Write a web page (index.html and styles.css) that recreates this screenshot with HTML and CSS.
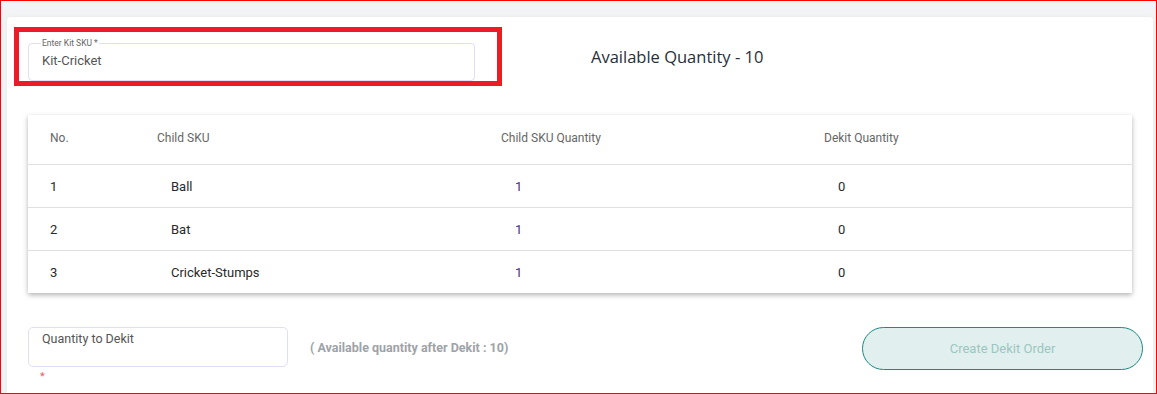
FILE: index.html
```html
<!DOCTYPE html>
<html lang="en">
<head>
    <meta charset="UTF-8">
    <meta name="viewport" content="width=device-width, initial-scale=1.0">
    <title>Dekit Order</title>
    <link rel="stylesheet" href="styles.css">
</head>
<body>

    <div class="frame">
        <div class="card">

            <!-- Kit SKU row -->
            <div class="top-row">
                <div class="highlight">
                    <fieldset class="sku-field">
                        <legend>Enter Kit SKU *</legend>
                        <span class="sku-value">Kit-Cricket</span>
                    </fieldset>
                </div>
                <div class="available">Available Quantity - 10</div>
            </div>

            <!-- Child SKU table -->
            <div class="sku-table">
                <div class="row head">
                    <div>No.</div>
                    <div>Child SKU</div>
                    <div>Child SKU Quantity</div>
                    <div>Dekit Quantity</div>
                </div>
                <div class="row">
                    <div>1</div>
                    <div class="pad">Ball</div>
                    <div class="pad qty">1</div>
                    <div class="pad">0</div>
                </div>
                <div class="row">
                    <div>2</div>
                    <div class="pad">Bat</div>
                    <div class="pad qty">1</div>
                    <div class="pad">0</div>
                </div>
                <div class="row">
                    <div>3</div>
                    <div class="pad">Cricket-Stumps</div>
                    <div class="pad qty">1</div>
                    <div class="pad">0</div>
                </div>
            </div>

            <!-- Dekit form -->
            <div class="bottom-row">
                <div class="qty-group">
                    <div class="qty-field">Quantity to Dekit</div>
                    <span class="required">*</span>
                </div>
                <div class="after-note">( Available quantity after Dekit : 10)</div>
                <button class="create-btn" disabled>Create Dekit Order</button>
            </div>

        </div>
    </div>

</body>
</html>
```

FILE: styles.css
```css
/* General reset */
* {
    margin: 0;
    padding: 0;
    box-sizing: border-box;
    font-family: Roboto, Arial, sans-serif;
}

body {
    width: 1157px;
    height: 394px;
    overflow: hidden;
}

/* Outer frame */
.frame {
    height: 394px;
    border: 1px solid #ff0000;
    background-color: #f2f3f5;
    padding: 16px 3px 0 6px;
}

.card {
    height: 100%;
    background-color: #fff;
    border-radius: 4px 4px 0 0;
    box-shadow: 0 0 3px rgba(0, 0, 0, 0.06);
    padding: 10px 10px 0 7px;
}

/* Top row */
.top-row {
    display: flex;
    align-items: center;
}

.highlight {
    width: 488px;
    height: 59px;
    border: 5px solid #ed1c24;
    padding: 6px 0 0 9px;
}

.sku-field {
    width: 447px;
    height: 43px;
    border: 1px solid #dfdff5;
    border-radius: 4px;
    padding: 0 13px;
}

.sku-field legend {
    font-size: 8.5px;
    color: #666;
    padding: 0 1px;
    margin-left: -1px;
}

.sku-value {
    display: block;
    font-size: 13px;
    color: #555;
    margin-top: 5px;
}

.available {
    margin: 0 0 0 89px;
    font-family: "Open Sans", Roboto, sans-serif;
    font-size: 16.5px;
    font-weight: 500;
    color: #27303a;
}

/* Table */
.sku-table {
    width: 1104px;
    margin: 29px 0 0 14px;
    box-shadow: 0 2px 5px rgba(0, 0, 0, 0.3);
}

.row {
    display: grid;
    grid-template-columns: 107px 344px 323px 1fr;
    align-items: center;
    height: 43px;
    padding-left: 22px;
    border-top: 1px solid #e0e0e0;
    font-size: 13px;
    color: #2a2a2a;
}

.row.head {
    height: 49px;
    border-top: none;
    font-size: 12px;
    color: #666;
    padding-bottom: 3px;
}

.row .pad {
    padding-left: 14px;
}

.row .qty {
    color: #4b2a8c;
}

/* Bottom row */
.bottom-row {
    display: flex;
    align-items: flex-start;
    margin: 34px 0 0 14px;
}

.qty-group {
    width: 260px;
}

.qty-field {
    height: 40px;
    border: 1px solid #dfdff5;
    border-radius: 5px;
    padding: 3px 13px;
    font-size: 12.5px;
    color: #555;
}

.required {
    display: block;
    color: #f05a6a;
    font-size: 11px;
    margin: 3px 0 0 12px;
}

.after-note {
    margin: 13px 0 0 22px;
    font-size: 12.5px;
    font-weight: bold;
    color: #9ea3a8;
}

.create-btn {
    margin-left: auto;
    width: 281px;
    height: 43px;
    border: 1px solid #1b8a82;
    border-radius: 22px;
    background-color: #e1f0ee;
    color: #9cc6c2;
    font-size: 13px;
}
```
